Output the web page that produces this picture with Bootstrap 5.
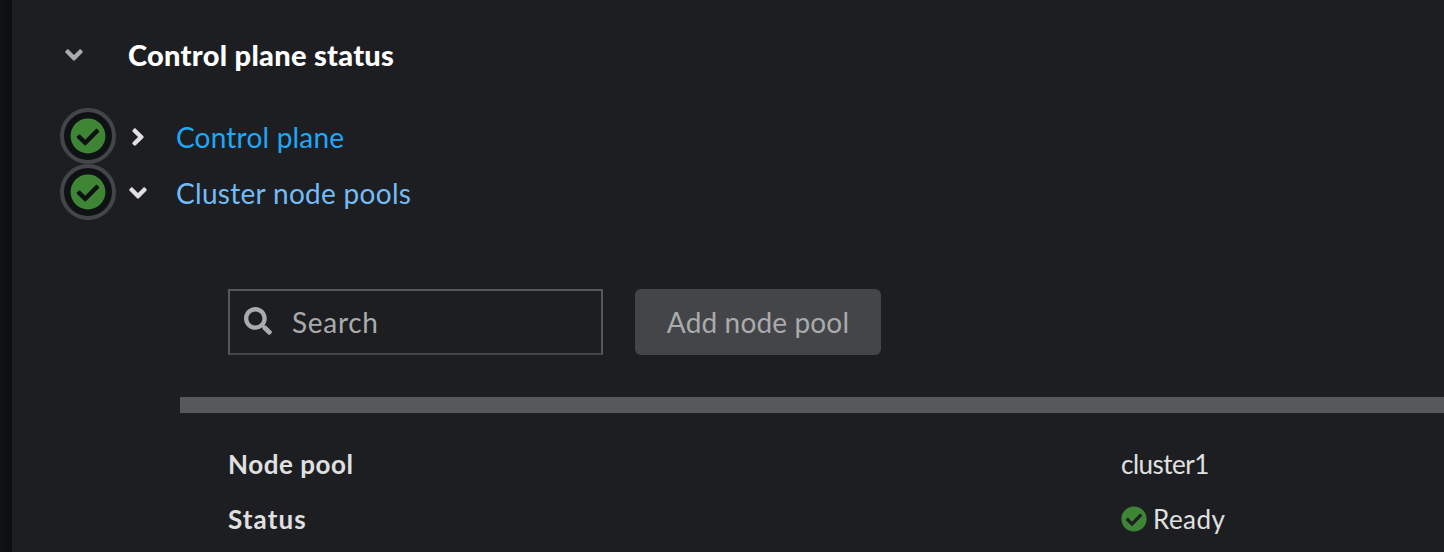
<!DOCTYPE html>
<html lang="en" data-bs-theme="dark">
<head>
<meta charset="utf-8">
<title>Control plane status</title>
<link href="https://cdn.jsdelivr.net/npm/bootstrap@5.3.0/dist/css/bootstrap.min.css" rel="stylesheet">
<style>
body{background:#1b1d21;color:#e0e0e0;font-family:Lato,"Liberation Sans",sans-serif;font-size:28px;line-height:40px;height:552px;overflow:hidden}
svg{fill:currentColor;display:block;flex:none}
.rail{width:12px;background:linear-gradient(90deg,#0f1214 30%,#0b0c0e)}
.panel{background:#1d1e22;padding:28px 0 0 48px;min-width:0}
.panel-title{height:54px;color:#fff;font-size:29px;font-weight:900;letter-spacing:.28px}
.toggle-box{width:68px;padding-left:5px;color:#aaabac}
.steps{padding-top:26px}
.step{height:56px}
.ring{width:56px;height:56px;border:4px solid #444548;background:#0f1214;color:#3e8635}
.caret-box{width:60px;padding:2px 0 0 13px}
.step-link{color:#1fa7f8;text-decoration:none;letter-spacing:.2px;padding-top:2px}
.step-link.current{color:#73bcf7;letter-spacing:.3px}
.pool-tools{margin:69px 0 0 168px;gap:32px}
.search-box{width:375px;height:66px;border:2px solid #57585a;border-bottom-color:#444548;padding:0 14px;color:#aaabac}
.search-box svg{margin-bottom:2px}
.search-box .form-control{background:transparent;border:0;box-shadow:none;padding:0 0 0 20px;font-size:28px;line-height:40px;color:#aaabac;letter-spacing:.7px}
.search-box .form-control::placeholder{color:#aaabac;opacity:1}
.add-btn,.add-btn:disabled{width:246px;height:66px;background:#444548;border:0;border-radius:6px;color:#aaabac;font-size:28px;line-height:40px;letter-spacing:.15px;opacity:1;padding:0}
.divider{height:16px;margin:42px 0 23px 120px;background:#57585a}
.pool-row{height:55px;padding-left:168px;font-size:26px}
.pool-key{width:893px;font-weight:700;letter-spacing:.55px}
.pool-key.status-key{letter-spacing:1.1px}
.pool-name{letter-spacing:-.5px}
.pool-state{gap:6px;letter-spacing:.45px}
.pool-state svg{color:#3e8635}
</style>
</head>
<body class="d-flex m-0">
<svg class="d-none">
<symbol id="check" viewBox="0 0 512 512"><path d="M504 256c0 136.967-111.033 248-248 248S8 392.967 8 256 119.033 8 256 8s248 111.033 248 248zM227.314 387.314l184-184c6.248-6.248 6.248-16.379 0-22.627l-22.627-22.627c-6.248-6.249-16.379-6.249-22.628 0L216 308.118l-70.059-70.059c-6.248-6.248-16.379-6.248-22.628 0l-22.627 22.627c-6.248 6.248-6.248 16.379 0 22.627l104 104c6.249 6.249 16.379 6.249 22.628.001z"/></symbol>
<symbol id="down" viewBox="0 0 320 512"><path d="M143 352.3L7 216.3c-9.4-9.4-9.4-24.6 0-33.9l22.6-22.6c9.4-9.4 24.6-9.4 33.9 0l96.4 96.4 96.4-96.4c9.4-9.4 24.6-9.4 33.9 0l22.6 22.6c9.4 9.4 9.4 24.6 0 33.9l-136 136c-9.2 9.4-24.4 9.4-33.8 0z"/></symbol>
<symbol id="right" viewBox="0 0 256 512"><path d="M224.3 273l-136 136c-9.4 9.4-24.6 9.4-33.9 0l-22.6-22.6c-9.4-9.4-9.4-24.6 0-33.9l96.4-96.4-96.4-96.4c-9.4-9.4-9.4-24.6 0-33.9L54.3 103c9.4-9.4 24.6-9.4 33.9 0l136 136c9.5 9.4 9.5 24.6.1 34z"/></symbol>
<symbol id="search" viewBox="0 0 512 512"><path d="M505 442.7L405.3 343c-4.5-4.5-10.6-7-17-7H372c27.6-35.3 44-79.7 44-128C416 93.1 322.9 0 208 0S0 93.1 0 208s93.1 208 208 208c48.3 0 92.7-16.4 128-44v16.3c0 6.4 2.5 12.5 7 17l99.7 99.7c9.4 9.4 24.6 9.4 33.9 0l28.3-28.3c9.4-9.4 9.4-24.6.1-34zM208 336c-70.7 0-128-57.2-128-128 0-70.7 57.2-128 128-128 70.7 0 128 57.2 128 128 0 70.7-57.2 128-128 128z"/></symbol>
</svg>
<aside class="rail flex-shrink-0"></aside>
<main class="panel flex-grow-1">
  <div class="panel-title d-flex align-items-center">
    <span class="toggle-box"><svg width="18" height="28"><use href="#down"/></svg></span><span>Control plane status</span>
  </div>
  <div class="steps">
    <div class="step d-flex align-items-center">
      <span class="ring rounded-circle d-flex align-items-center justify-content-center"><svg width="36" height="36"><use href="#check"/></svg></span>
      <span class="caret-box"><svg width="18" height="28"><use href="#right"/></svg></span>
      <a class="step-link" href="#">Control plane</a>
    </div>
    <div class="step d-flex align-items-center">
      <span class="ring rounded-circle d-flex align-items-center justify-content-center"><svg width="36" height="36"><use href="#check"/></svg></span>
      <span class="caret-box"><svg width="18" height="28"><use href="#down"/></svg></span>
      <a class="step-link current" href="#">Cluster node pools</a>
    </div>
  </div>
  <div class="pool-tools d-flex">
    <div class="search-box d-flex align-items-center"><svg width="28" height="28"><use href="#search"/></svg><input class="form-control rounded-0" type="text" placeholder="Search"></div>
    <button class="btn add-btn" disabled>Add node pool</button>
  </div>
  <div class="divider"></div>
  <div class="pool-row d-flex align-items-center"><span class="pool-key">Node pool</span><span class="pool-name">cluster1</span></div>
  <div class="pool-row d-flex align-items-center"><span class="pool-key status-key">Status</span><span class="pool-state d-flex align-items-center"><svg width="26" height="26"><use href="#check"/></svg>Ready</span></div>
</main>
<script src="https://cdn.jsdelivr.net/npm/bootstrap@5.3.0/dist/js/bootstrap.bundle.min.js"></script>
</body>
</html>
